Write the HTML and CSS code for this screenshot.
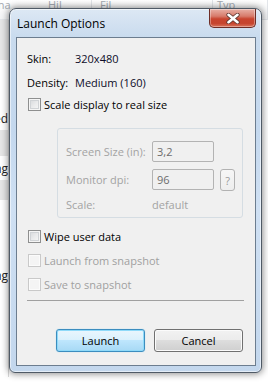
FILE: index.html
```html
<!DOCTYPE html>
<html>
<head>
<meta charset="utf-8">
<link rel="stylesheet" href="styles.css">
</head>
<body>
<div class="desk">
  <div class="dhead">
    <span class="hcell h1">Ordna</span>
    <span class="hcell h2">Hil</span>
    <span class="hcell h3">Fil</span>
    <span class="hcell h4">Typ</span>
  </div>
  <div class="drow grey b1"><span></span></div>
  <div class="drow b2"><span></span></div>
  <div class="drow b3"><span>Installed</span></div>
  <div class="drow grey b4"><span></span></div>
  <div class="drow b3"><span>Pending</span></div>
  <div class="drow grey b5"><span></span></div>
  <div class="drow b6"><span></span></div>
  <div class="drow b3"><span>Pending</span></div>
  <div class="drow b7"><span></span></div>
</div>

<div class="win">
  <div class="title">Launch Options</div>
  <div class="close">
    <svg width="16" height="11" viewBox="0 0 16 11"><path d="M3.5 1.8 L12.5 9.2 M12.5 1.8 L3.5 9.2" stroke="#5e3630" stroke-width="4.2" stroke-linecap="round"/><path d="M3.5 1.8 L12.5 9.2 M12.5 1.8 L3.5 9.2" stroke="#fff" stroke-width="2.6" stroke-linecap="round"/></svg>
  </div>
  <div class="client">
    <div class="row info"><span class="k">Skin:</span><span class="v">320x480</span></div>
    <div class="row info r2"><span class="k">Density:</span><span class="v">Medium (160)</span></div>
    <div class="row check r3"><span class="cb"></span><span>Scale display to real size</span></div>

    <div class="group">
      <div class="grow"><span class="gl">Screen Size (in):</span><span class="inp">3,2</span></div>
      <div class="grow g2"><span class="gl">Monitor dpi:</span><span class="inp">96</span><span class="qbtn">?</span></div>
      <div class="grow g3"><span class="gl">Scale:</span><span class="gv">default</span></div>
    </div>

    <div class="row check w1"><span class="cb"></span><span>Wipe user data</span></div>
    <div class="row check dis w2"><span class="cb"></span><span>Launch from snapshot</span></div>
    <div class="row check dis w2"><span class="cb"></span><span>Save to snapshot</span></div>

    <div class="sep"></div>

    <div class="btns">
      <span class="btn def">Launch</span>
      <span class="btn">Cancel</span>
    </div>
  </div>
</div>
</body>
</html>
```
FILE: styles.css
```css
* { box-sizing: border-box; margin: 0; padding: 0; }
body {
  width: 268px;
  height: 382px;
  overflow: hidden;
  background: #fff;
  font-family: "Open Sans", "Noto Sans", sans-serif;
  font-size: 11px;
  color: #000;
  position: relative;
}

/* desktop behind the dialog */
.desk { display: flex; flex-direction: column; height: 382px; overflow: hidden; }
.dhead {
  height: 20px;
  flex: none;
  display: flex;
  background: linear-gradient(#ffffff, #f3f4f6);
  border-bottom: 1px solid #e3e6ea;
  color: #a4aab2;
  font-size: 11px;
}
.hcell { border-right: 1px solid #e2e5e9; line-height: 9px; overflow: hidden; white-space: nowrap; }
.h1 { width: 40px; margin-left: -22px; border-right: none; }
.h2 { width: 74px; padding-left: 30px; }
.h3 { width: 121px; padding-left: 8px; }
.h4 { flex: 1; padding-left: 4px; }
.drow {
  width: 9px;
  flex: none;
  display: flex;
  justify-content: flex-end;
  align-items: center;
  overflow: hidden;
  white-space: nowrap;
  font-size: 12px;
  color: #222;
  border-right: 1px solid #d8d8d8;
}
.drow.grey { background: #e6e6e6; }
.b1 { height: 40px; }
.b2 { height: 46px; }
.b3 { height: 24px; }
.b4 { height: 26px; }
.b5 { height: 20px; }
.b6 { height: 63px; }
.b7 { height: 90px; }

/* window */
.win {
  position: absolute;
  left: 9px;
  top: 8px;
  width: 253px;
  height: 365px;
  border: 1px solid #4f5a66;
  border-radius: 7px 7px 6px 6px;
  background: linear-gradient(180deg, #dde8f4 0px, #c9dbee 28px, #c4d8ee 120px, #cfe0f3 200px, #c3d7ed 365px);
  box-shadow: 0 0 7px 1px rgba(0,0,0,0.45), inset 0 0 0 1px rgba(255,255,255,0.55);
  padding: 0 5px 6px 6px;
  display: flex;
  flex-direction: column;
}
.title {
  height: 28px;
  display: flex;
  align-items: center;
  padding-left: 1px;
  font-size: 12px;
  color: #000;
}
.close {
  position: absolute;
  left: 199px;
  top: 0;
  width: 47px;
  height: 19px;
  border: 1px solid #6e2d26;
  border-top: none;
  border-radius: 0 0 5px 5px;
  background: linear-gradient(180deg, #e8b0a6 0%, #d77b6b 40%, #c8442f 55%, #c6452f 80%, #d9745d 100%);
  box-shadow: inset 0 0 0 1px rgba(255,255,255,0.35);
  display: flex;
  align-items: center;
  justify-content: center;
}
.client {
  flex: 1;
  border: 1px solid #6c7d8f;
  background: #f0f0f0;
  padding: 10px 10px 0 10px;
  display: flex;
  flex-direction: column;
}
.row { height: 20px; display: flex; align-items: center; }
.info .k { width: 48px; }
.info .v { color: #0d0d28; }
.r2 { margin-top: 4px; }
.r3 { margin-top: 2px; }

.cb {
  width: 13px;
  height: 13px;
  margin-left: 1px;
  margin-right: 3px;
  border: 1px solid #8e8f8f;
  background: linear-gradient(135deg, #d3d5d8 0%, #e9eaeb 50%, #fafafa 100%);
  box-shadow: inset 0 0 0 1px #f5f5f5, inset 0 0 0 2px #d0d3d6;
  flex: none;
}
.dis { color: #a0a0a0; }
.dis .cb {
  border-color: #c9c9c9;
  background: #f4f4f4;
  box-shadow: inset 0 0 0 1px #fbfbfb;
}

.group {
  margin-top: 14px;
  margin-left: 30px;
  width: 186px;
  height: 90px;
  border: 1px solid #d5dde3;
  border-radius: 3px;
  padding: 12px 0 0 8px;
  display: flex;
  flex-direction: column;
  color: #a3a3a3;
}
.grow { display: flex; align-items: flex-start; height: 21px; }
.gl { width: 86px; line-height: 21px; }
.inp {
  width: 62px;
  height: 21px;
  border: 1px solid #b3b3b3;
  border-radius: 2px;
  padding-left: 4px;
  line-height: 19px;
  color: #6d6d6d;
  background: #f0f0f0;
}
.g2 { margin-top: 7px; height: 22px; }
.qbtn {
  width: 15px;
  height: 22px;
  margin-left: 6px;
  border: 1px solid #b2b2b2;
  border-radius: 3px;
  background: linear-gradient(#f6f6f6, #eeeeee);
  color: #9a9a9a;
  display: flex;
  align-items: center;
  justify-content: center;
}
.g3 { margin-top: 4px; height: 20px; }
.g3 .gl { line-height: 20px; }
.gv { line-height: 20px; color: #a3a3a3; }

.w1 { margin-top: 8px; }
.w2 { margin-top: 4px; }

.sep {
  margin-top: 6px;
  height: 1px;
  background: #a0a0a0;
  width: 217px;
}
.btns {
  margin-top: 28px;
  display: flex;
  justify-content: flex-end;
  gap: 9px;
  padding-right: 1px;
  width: 217px;
}
.btn {
  width: 89px;
  height: 23px;
  border: 1px solid #707070;
  border-radius: 3px;
  background: linear-gradient(180deg, #f2f2f2 0%, #ebebeb 50%, #dddddd 50%, #cfcfcf 100%);
  box-shadow: inset 0 0 0 1px #fbfbfb;
  display: flex;
  align-items: center;
  justify-content: center;
  color: #000;
}
.btn.def {
  border-color: #3c8dbf;
  background: linear-gradient(180deg, #eaf6fd 0%, #d9f0fc 50%, #bee6fd 50%, #a7d9f5 100%);
  box-shadow: inset 0 0 0 1px #8fdaf9, 0 0 1px #7fd0f4;
}
```
